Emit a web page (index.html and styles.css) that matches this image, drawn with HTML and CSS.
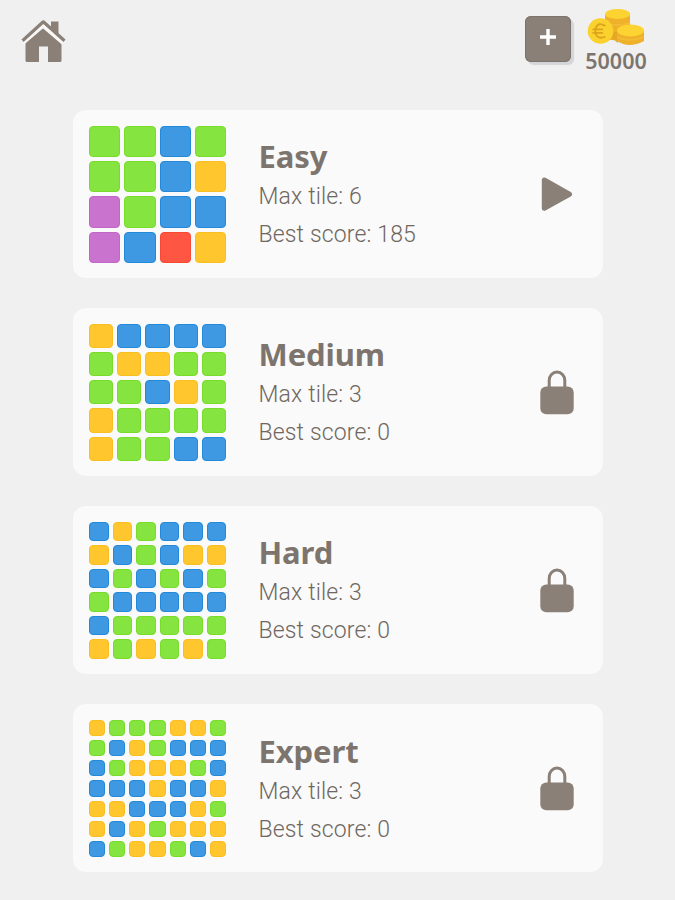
FILE: index.html
```html
<!DOCTYPE html>
<html lang="en">
<head>
<meta charset="utf-8">
<title>Levels</title>
<link rel="stylesheet" href="styles.css">
</head>
<body>
<svg class="symbols" width="0" height="0">
<symbol id="lock" viewBox="0 0 36 46">
<path d="M10.200 20V11.500a7.800 8.500 0 0 1 15.600 0V20" fill="none" stroke="#8a8077" stroke-width="3"/>
<rect x="1.300" y="17.500" width="33.400" height="27.800" rx="6" fill="#8a8077"/>
</symbol>
</svg>

<div class="header">
<a class="home" href="#"><svg width="46" height="44" viewBox="0 0 46 44">
<path d="M31 2.500H38.500V16L31 10Z" fill="#8a8077"/>
<path d="M5.500 20L23 5L41.500 21.500V41.500Q41.500 43 40 43H28V27.500H19V43H7Q5.500 43 5.500 41.500Z" fill="#8a8077"/>
<path d="M2.500 23.500L23 6L43.500 23.500" fill="none" stroke="#f9f8f7" stroke-width="5"/>
<path d="M2.500 21.800L23.300 2.800L44.500 21.800" fill="none" stroke="#8a8077" stroke-width="3.200" stroke-linejoin="round"/>
</svg></a>
<div class="wallet">
<a class="plus" href="#"><svg width="18" height="18" viewBox="0 0 18 18"><path d="M9 1V17M1 9H17" stroke="#fff" stroke-width="3.400"/></svg></a>
<div class="coins">
<svg width="58" height="40" viewBox="0 0 58 40">
<path d="M18 5V26Q30 28 43 20V5Z" fill="#efb02a"/>
<path d="M18 14Q30 18 43 14" fill="none" stroke="#f4bc35" stroke-width="1.500"/>
<ellipse cx="30.500" cy="5" rx="12.500" ry="5" fill="#fdd331"/>
<path d="M18 26L31 22V34Q26 28 18 33Z" fill="#e5a726"/>
<path d="M30 22V32Q42 40 57 32V22Z" fill="#efb02a"/>
<path d="M30 28Q42 34 57 28" fill="none" stroke="#f4bc35" stroke-width="1.500"/>
<ellipse cx="43.500" cy="21.500" rx="13.500" ry="6" fill="#fdd331"/>
<circle cx="13.500" cy="22" r="12.800" fill="#fbd12e"/>
<path d="M18.500 17Q11 12.500 8.800 19Q7.500 23 9.500 26.500Q12.500 30.500 18.500 27.500M5.500 20.300H16M5.500 23.800H16" fill="none" stroke="#dda31c" stroke-width="1.800"/>
</svg>
<span class="amount">50000</span>
</div>
</div>
</div>

<div class="levels">
<div class="card">
<div class="board n4" data-tiles="ggbg ggby pgbb pbry"></div>
<div class="info">
<h2>Easy</h2>
<p>Max tile: 6</p>
<p>Best score: 185</p>
</div>
<svg class="action" width="36" height="46" viewBox="0 0 36 46"><path d="M5.300 9V37.300L30.500 23.200Z" fill="#8a8077" stroke="#8a8077" stroke-width="5" stroke-linejoin="round"/></svg>
</div>

<div class="card">
<div class="board n5" data-tiles="ybbbb gyygg ggbyg ygggg yggbb"></div>
<div class="info">
<h2>Medium</h2>
<p>Max tile: 3</p>
<p>Best score: 0</p>
</div>
<svg class="action" width="36" height="46"><use href="#lock"/></svg>
</div>

<div class="card">
<div class="board n6" data-tiles="bygbbb ybgbyy bgbgbg gbbbbb bggggg ygygyg"></div>
<div class="info">
<h2>Hard</h2>
<p>Max tile: 3</p>
<p>Best score: 0</p>
</div>
<svg class="action" width="36" height="46"><use href="#lock"/></svg>
</div>

<div class="card">
<div class="board n7" data-tiles="ygggyyg gbygbbb bgyyygb bbbybby yybbbyg ybygyyy bgyygby"></div>
<div class="info">
<h2>Expert</h2>
<p>Max tile: 3</p>
<p>Best score: 0</p>
</div>
<svg class="action" width="36" height="46"><use href="#lock"/></svg>
</div>
</div>

<script src="tiles.js"></script>
</body>
</html>
```
FILE: styles.css
```css
body {
  margin: 0;
  height: 900px;
  overflow: hidden;
  background: #f0f0f0;
  color: #7d756d;
  font-family: Roboto, sans-serif;
}

.symbols {
  display: none;
}

/* Header */

.header {
  display: flex;
  justify-content: space-between;
  height: 91.5px;
  padding: 9px 26px 9px 20px;
  box-sizing: border-box;
}

.home {
  padding-top: 10px;
}

.home svg, .plus svg, .coins svg {
  display: block;
}

.wallet {
  display: flex;
  gap: 12px;
}

.plus {
  display: flex;
  justify-content: center;
  width: 46px;
  height: 46px;
  margin-top: 7px;
  padding-top: 12px;
  box-sizing: border-box;
  border-radius: 6px;
  background: #8a8077;
  box-shadow: inset 0 0 0 1px #7b736c, 3px 3px 1px #d3d5d9;
}

.coins {
  display: flex;
  flex-direction: column;
  align-items: center;
  width: 66px;
}

.amount {
  margin-top: -2px;
  font: 600 21.5px/28px "Noto Sans", sans-serif;
}

/* Level cards */

.levels {
  display: flex;
  flex-direction: column;
  gap: 29.6px;
  padding: 18px 72px 0 72.5px;
}

.card {
  display: flex;
  align-items: center;
  height: 168.5px;
  box-sizing: border-box;
  padding: 0 28.5px 0 16.5px;
  border-radius: 13px;
  background: #fafafa;
}

.board {
  display: grid;
  width: 137px;
  height: 137px;
  gap: 4px;
  padding-top: 1px;
}

.n4 { grid-template: repeat(4, 1fr) / repeat(4, 1fr); }
.n5 { grid-template: repeat(5, 1fr) / repeat(5, 1fr); }
.n6 { grid-template: repeat(6, 1fr) / repeat(6, 1fr); }
.n7 { grid-template: repeat(7, 1fr) / repeat(7, 1fr); }

.tile {
  border: 1px solid;
  border-radius: 4px;
}

.g { background: #85e43f; border-color: #78dd29; }
.b { background: #3e98e2; border-color: #238ad9; }
.y { background: #ffc62e; border-color: #fabe20; }
.p { background: #c973ce; border-color: #c267c8; }
.r { background: #ff5543; border-color: #f84934; }

.info {
  flex: 1;
  padding-left: 32.5px;
}

.info h2 {
  margin: 0 0 2px;
  font: bold 31px/40px "Noto Sans", sans-serif;
  letter-spacing: -0.1px;
}

.info p {
  margin: 0;
  font-size: 23px;
  font-weight: 300;
  line-height: 38px;
  letter-spacing: 0.15px;
  color: #6f6760;
}

.info p:last-child {
  margin-bottom: -3px;
}
```
FILE: tiles.js
```js
var boards = document.querySelectorAll('.board');
for (var i = 0; i < boards.length; i++) {
  var tiles = boards[i].getAttribute('data-tiles').replace(/ /g, '');
  for (var j = 0; j < tiles.length; j++) {
    var tile = document.createElement('div');
    tile.className = 'tile ' + tiles[j];
    boards[i].appendChild(tile);
  }
}
```
